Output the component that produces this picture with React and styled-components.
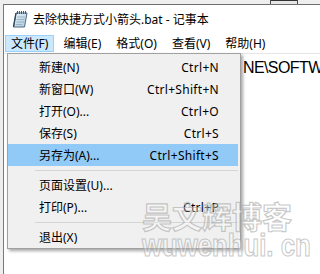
import React from "react";
import styled, { createGlobalStyle } from "styled-components";

const GlobalStyle = createGlobalStyle`
  html, body { margin: 0; padding: 0; background: #eeeeee; }
  body { overflow: hidden; font-family: "Noto Sans", "Noto Sans CJK SC", sans-serif; }
`;

const Screen = styled.div`
  position: relative;
  width: 320px;
  height: 274px;
  overflow: hidden;
  display: flex;
  flex-direction: column;
  background: #eeeeee;
`;

const TopStrip = styled.div`
  height: 4px;
  flex: none;
  display: flex;
`;

const StripBox = styled.div`
  margin-left: 270px;
  width: 28px;
  height: 4px;
  box-sizing: border-box;
  border-left: 1px solid #4a4a4a;
  border-right: 1px solid #4a4a4a;
  background: linear-gradient(#333 0 1px, #e6e6e6 1px);
`;

const Window = styled.div`
  position: relative;
  flex: 1;
  margin-left: 3px;
  border-top: 1px solid #6e6e6e;
  border-left: 1px solid #7a7a7a;
  background: #ffffff;
  display: flex;
  flex-direction: column;
`;

const TitleBar = styled.div`
  height: 28px;
  flex: none;
  display: flex;
  align-items: center;
  gap: 5px;
  padding-left: 8px;
  font-size: 12px;
  color: #000;
  white-space: nowrap;
`;

const MenuBar = styled.div`
  height: 20px;
  flex: none;
  display: flex;
  align-items: flex-start;
  gap: 3px;
  padding: 2px 0 0 1px;
  box-sizing: border-box;
`;

const MenuBarItem = styled.div`
  height: 17px;
  box-sizing: border-box;
  padding: 0 5px;
  border: 1px solid ${(p) => (p.$open ? "#99d1ff" : "transparent")};
  background: ${(p) => (p.$open ? "#cce8ff" : "transparent")};
  font-size: 12px;
  line-height: 15px;
  color: #000;
  white-space: nowrap;
`;

const Editor = styled.div`
  flex: 1;
  border-top: 1px solid #e6e6e6;
  padding-top: 4px;
  overflow: hidden;
`;

const Line = styled.div`
  padding-left: 239px;
  font-family: "Liberation Sans", Arial, sans-serif;
  font-size: 16px;
  line-height: 20px;
  letter-spacing: -0.6px;
  color: #000;
  white-space: nowrap;
`;

const Menu = styled.div`
  position: absolute;
  left: 3px;
  top: 48px;
  width: 234px;
  box-sizing: border-box;
  border: 1px solid #a0a0a0;
  background: #f0f0f0;
  padding: 2px 2px 0 0;
  box-shadow: 2px 2px 3px rgba(0, 0, 0, 0.35);
  display: flex;
  flex-direction: column;
`;

const Item = styled.div`
  height: 22px;
  display: flex;
  align-items: center;
  padding: 0 19px 0 31px;
  background: ${(p) => (p.$hot ? "#91c9f7" : "transparent")};
  font-size: 12px;
  color: #000;
  white-space: nowrap;
`;

const Shortcut = styled.span`
  margin-left: auto;
  letter-spacing: 0.3px;
`;

const Separator = styled.div`
  height: 8px;
  &::after {
    content: "";
    display: block;
    margin: 4px 0 0 27px;
    border-top: 1px solid #d5d5d5;
  }
`;

const Watermark = styled.div`
  position: absolute;
  left: 142px;
  top: 200px;
  display: flex;
  flex-direction: column;
  gap: 3px;
  pointer-events: none;
`;

const MarkTitle = styled.div`
  font-family: "Noto Sans CJK SC", sans-serif;
  font-weight: 700;
  font-size: 30px;
  line-height: 30px;
  color: rgba(255, 255, 255, 0.3);
  -webkit-text-stroke: 1.2px rgba(165, 165, 165, 0.6);
  white-space: nowrap;
`;

const MarkUrl = styled.div`
  font-family: "Liberation Sans", Arial, sans-serif;
  font-weight: 700;
  font-size: 31px;
  line-height: 26px;
  color: rgba(255, 255, 255, 0.3);
  -webkit-text-stroke: 1.2px rgba(165, 165, 165, 0.6);
  transform: scaleX(0.83);
  transform-origin: left center;
  white-space: nowrap;
`;

function NotepadIcon() {
  return (
    <svg width="16" height="18" viewBox="0 0 16 18">
      <defs>
        <linearGradient id="np" x1="0" y1="0" x2="1" y2="1">
          <stop offset="0" stopColor="#eef6fb" />
          <stop offset="1" stopColor="#a9c8de" />
        </linearGradient>
      </defs>
      <path d="M4 3 L15 3 L12.5 17 L1.5 17 Z" fill="url(#np)" stroke="#4f6b82" strokeWidth="1" />
      <path d="M1.5 17 L4 3" stroke="#2f4a60" strokeWidth="1.4" />
      <path d="M5 7 L12.8 7 M4.6 9.5 L12.4 9.5 M4.2 12 L12 12 M3.8 14.5 L10 14.5" stroke="#8aa6bb" strokeWidth="0.8" />
      {[5, 7, 9, 11, 13].map((x) => (
        <rect key={x} x={x} y="1" width="1" height="3" fill="#555" />
      ))}
    </svg>
  );
}

const menuTop = ["文件(F)", "编辑(E)", "格式(O)", "查看(V)", "帮助(H)"];

const entries = [
  { label: "新建(N)", key: "Ctrl+N" },
  { label: "新窗口(W)", key: "Ctrl+Shift+N" },
  { label: "打开(O)...", key: "Ctrl+O" },
  { label: "保存(S)", key: "Ctrl+S" },
  { label: "另存为(A)...", key: "Ctrl+Shift+S", hot: true },
  { sep: true },
  { label: "页面设置(U)...", key: "" },
  { label: "打印(P)...", key: "Ctrl+P" },
  { sep: true },
  { label: "退出(X)", key: "" },
];

export default function App() {
  return (
    <Screen>
      <GlobalStyle />
      <TopStrip>
        <StripBox />
      </TopStrip>
      <Window>
        <TitleBar>
          <NotepadIcon />
          <span>去除快捷方式小箭头.bat - 记事本</span>
        </TitleBar>
        <MenuBar>
          {menuTop.map((m, i) => (
            <MenuBarItem key={m} $open={i === 0}>
              {m}
            </MenuBarItem>
          ))}
        </MenuBar>
        <Editor>
          <Line>NE\SOFTWARE\Microsoft</Line>
        </Editor>
        <Menu>
          {entries.map((e, i) =>
            e.sep ? (
              <Separator key={i} />
            ) : (
              <Item key={i} $hot={e.hot}>
                <span>{e.label}</span>
                <Shortcut>{e.key}</Shortcut>
              </Item>
            )
          )}
        </Menu>
      </Window>
      <Watermark>
        <MarkTitle>吴文辉博客</MarkTitle>
        <MarkUrl>wuwenhui. cn</MarkUrl>
      </Watermark>
    </Screen>
  );
}
